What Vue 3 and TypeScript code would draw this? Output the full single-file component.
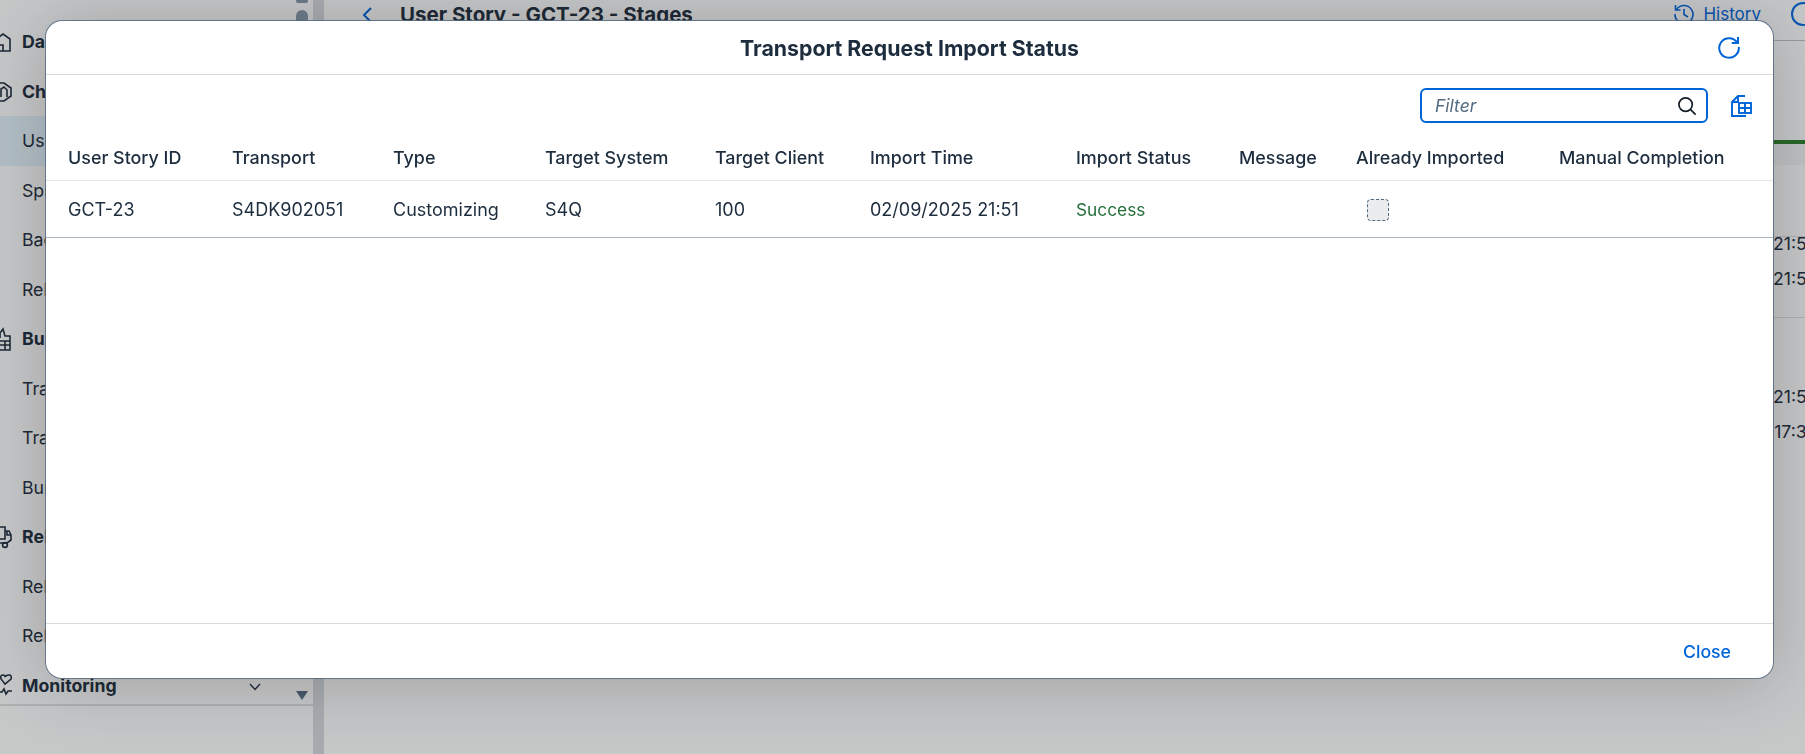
<script setup lang="ts">
const navItems = [
  { label: "Dashboard", group: true, icon: "home" },
  { label: "Change Management", group: true, icon: "change" },
  { label: "User Stories", selected: true },
  { label: "Sprints" },
  { label: "Backlog" },
  { label: "Releases" },
  { label: "Build", group: true, icon: "build" },
  { label: "Transports" },
  { label: "Transport Logs" },
  { label: "Builds" },
  { label: "Release Management", group: true, icon: "release" },
  { label: "Release Plans" },
  { label: "Release Notes" },
];

const columns = [
  "User Story ID",
  "Transport",
  "Type",
  "Target System",
  "Target Client",
  "Import Time",
  "Import Status",
  "Message",
  "Already Imported",
  "Manual Completion",
];
</script>

<template>
  <div class="page">
    <aside class="sidebar">
      <nav class="nav">
        <div
          v-for="item in navItems"
          :key="item.label"
          class="nav-item"
          :class="{ group: item.group, selected: item.selected }"
        >
          <span class="nav-icon">
            <svg v-if="item.icon === 'home'" width="12" height="20" viewBox="0 0 12 20" fill="none" stroke="#1d2d3e" stroke-width="1.6">
              <path d="M-6 9 L3 2 L10 7 V19 H-2 M3 19 V13 H0" />
            </svg>
            <svg v-if="item.icon === 'change'" width="13" height="22" viewBox="0 0 13 22" fill="none" stroke="#1d2d3e" stroke-width="1.6">
              <path d="M-2 3 H4 L11 8 V16 L4 21 H0 M1 17 V9 L4 7 L7 10 V17" />
            </svg>
            <svg v-if="item.icon === 'build'" width="12" height="24" viewBox="0 0 12 24" fill="none" stroke="#1d2d3e" stroke-width="1.6">
              <path d="M0 11 V6 L3 2 L5 9 H10 V23 H0 M0 14 H10 M0 18 H10 M5 14 V23" />
            </svg>
            <svg v-if="item.icon === 'release'" width="13" height="24" viewBox="0 0 13 24" fill="none" stroke="#1d2d3e" stroke-width="1.6">
              <path d="M0 2 H5 V14 H0 M5 6 H9 L11 10 V15 L7 18 H0 M7 6 V10 H11" />
              <circle cx="5" cy="20" r="2.4" />
            </svg>
          </span>
          <span class="nav-label">{{ item.label }}</span>
        </div>
        <div class="nav-item group last">
          <span class="nav-icon">
            <svg width="13" height="26" viewBox="0 0 13 26" fill="none" stroke="#1d2d3e" stroke-width="1.6">
              <path d="M5 12 L1 7 Q0 3 3 3 Q5 3 5 5 Q6 3 9 3 Q12 3 11 7 Z" />
              <path d="M0 20 H2 L4 17 L6 22 L8 19 H12" />
            </svg>
          </span>
          <span class="nav-label">Monitoring</span>
          <svg class="chevron" width="12" height="8" viewBox="0 0 12 8" fill="none" stroke="#1d2d3e" stroke-width="1.3">
            <path d="M1 1 L6 6.5 L11 1" />
          </svg>
        </div>
      </nav>
      <div class="nav-scroll">
        <span class="scroll-cap"></span>
        <span class="scroll-thumb"></span>
        <span class="scroll-arrow"></span>
      </div>
    </aside>
    <div class="splitter"></div>

    <main class="main">
      <header class="main-header">
        <svg class="back" width="11" height="16" viewBox="0 0 11 16" fill="none" stroke="#0064d9" stroke-width="2">
          <path d="M9 1 L2 8 L9 15" />
        </svg>
        <h1 class="main-title">User Story - GCT-23 - Stages</h1>
        <div class="main-actions">
          <svg width="22" height="22" viewBox="0 0 22 22" fill="none" stroke="#0064d9" stroke-width="1.6">
            <path d="M3.5 6.5 A9 9 0 1 1 2 11" />
            <path d="M2.5 2 V7 H7.5" />
            <path d="M11 6 V11.5 L15 14" />
          </svg>
          <span>History</span>
          <span class="round-icon"></span>
        </div>
      </header>
      <div class="progress-band">
        <div class="progress-bar"></div>
        <div class="progress-tail"></div>
      </div>
      <section class="times first">
        <div class="time-line"></div>
        <div class="time">02/09/2025 21:51</div>
        <div class="time">02/09/2025 21:51</div>
      </section>
      <section class="times second">
        <div class="time">02/09/2025 21:51</div>
        <div class="time">02/09/2025 17:31</div>
      </section>
    </main>

    <div class="overlay">
      <div class="dialog">
        <header class="dialog-header">
          <h2 class="dialog-title">Transport Request Import Status</h2>
          <svg class="refresh" width="24" height="24" viewBox="0 0 24 24" fill="none" stroke="#0064d9" stroke-width="2">
            <path d="M20.2 7.5 A9.8 9.8 0 1 0 21.8 12" />
            <path d="M21 2 V8 H14.8" />
          </svg>
        </header>

        <div class="dialog-body">
          <div class="toolbar">
            <label class="filter">
              <input class="filter-input" type="text" placeholder="Filter" />
              <svg width="20" height="20" viewBox="0 0 20 20" fill="none" stroke="#131e29" stroke-width="1.7">
                <circle cx="8.6" cy="8.6" r="6.7" />
                <path d="M13.6 13.6 L18.6 18.6" />
              </svg>
            </label>
            <svg class="export" width="22" height="24" viewBox="0 0 22 24" fill="none" stroke="#0064d9" stroke-width="1.9">
              <path d="M15 2 H8 L2 8 V22 H16" />
              <path d="M8 2 V8 H2" />
              <rect x="9" y="9" width="12" height="10" fill="#fff" />
              <path d="M9 14 H21 M15 9 V19" />
            </svg>
          </div>

          <div class="table-row table-head">
            <div v-for="col in columns" :key="col" class="cell">{{ col }}</div>
          </div>
          <div class="table-row table-data">
            <div class="cell">GCT-23</div>
            <div class="cell">S4DK902051</div>
            <div class="cell">Customizing</div>
            <div class="cell">S4Q</div>
            <div class="cell">100</div>
            <div class="cell">02/09/2025 21:51</div>
            <div class="cell status">Success</div>
            <div class="cell"></div>
            <div class="cell"><span class="checkbox"></span></div>
            <div class="cell"></div>
          </div>
        </div>

        <footer class="dialog-footer">
          <button class="close-btn">Close</button>
        </footer>
      </div>
    </div>
  </div>
</template>

<style>
html,
body {
  margin: 0;
  height: 100%;
  overflow: hidden;
}
</style>

<style scoped>
.page {
  display: flex;
  height: 754px;
  overflow: hidden;
  background: #f5f6f7;
  color: #1d2d3e;
  font-family: Inter, "Liberation Sans", sans-serif;
  font-size: 17.7px;
}

.sidebar {
  display: flex;
  width: 313px;
  height: 706px;
  border-bottom: 2px solid #d5d9dd;
  box-sizing: border-box;
  flex-shrink: 0;
}

.nav {
  flex: 1;
  padding-top: 17px;
}

.nav-item {
  display: flex;
  align-items: center;
  height: 49.5px;
  color: #1d2d3e;
}

.nav-item.group {
  font-weight: 700;
}

.nav-item.selected {
  background: #dcebf5;
}

.nav-icon {
  display: flex;
  align-items: center;
  width: 22px;
  flex-shrink: 0;
}

.nav-label {
  flex: 1;
}

.chevron {
  margin: 4px 32px 0 0;
}

.nav-scroll {
  position: relative;
  width: 20px;
}

.scroll-cap {
  position: absolute;
  top: -4px;
  left: 3px;
  width: 12px;
  height: 7px;
  border-radius: 2px;
  background: #8396a8;
}

.scroll-thumb {
  position: absolute;
  top: 10px;
  left: 3px;
  width: 12px;
  height: 660px;
  border-radius: 6px;
  background: #8396a8;
}

.scroll-arrow {
  position: absolute;
  top: 691px;
  left: 3px;
  width: 0;
  height: 0;
  border-left: 6px solid transparent;
  border-right: 6px solid transparent;
  border-top: 9px solid #556b81;
}

.splitter {
  width: 11px;
  background: #cfd4d9;
  flex-shrink: 0;
}

.main {
  flex: 1;
  min-width: 0;
}

.main-header {
  display: flex;
  align-items: center;
  height: 41px;
  padding: 0 0 13px 38px;
  box-sizing: border-box;
  border-bottom: 1px solid #b8bec4;
  white-space: nowrap;
}

.back {
  margin-top: 2px;
}

.main-title {
  margin: 2px 0 0 27px;
  font-size: 20.5px;
  font-weight: 700;
}

.main-actions {
  display: flex;
  align-items: center;
  gap: 8px;
  margin-left: auto;
  margin-top: 1px;
  color: #0064d9;
  font-size: 17px;
}

.round-icon {
  width: 20px;
  height: 20px;
  margin: 0 -10px 0 22px;
  border: 2px solid #0064d9;
  border-radius: 50%;
}

.progress-band {
  height: 124px;
  padding-top: 99px;
  box-sizing: border-box;
}

.progress-bar {
  height: 4px;
  background: #2b7c2b;
}

.progress-tail {
  height: 21px;
  background: #eceef0;
}

.times {
  display: flex;
  flex-direction: column;
  gap: 14px;
  margin-right: -9px;
  white-space: nowrap;
  text-align: right;
}

.time {
  line-height: 21px;
}

.times.first {
  height: 153px;
  box-sizing: border-box;
  border-bottom: 1px solid #d5d9dd;
  padding-top: 68px;
  position: relative;
}

.time-line {
  position: absolute;
  top: 71px;
  left: 0;
  right: 0;
  border-top: 1px solid #d5d9dd;
}

.times.second {
  padding-top: 68px;
}

.overlay {
  position: fixed;
  inset: 0;
  background: rgba(30, 30, 30, 0.22);
  display: flex;
  align-items: flex-start;
  justify-content: flex-start;
}

.dialog {
  display: flex;
  flex-direction: column;
  width: 1727px;
  height: 657px;
  margin: 21px 0 0 46px;
  background: #fff;
  border-radius: 16px;
  box-shadow: 0 0 0 1px rgba(85, 107, 130, 0.85), 0 4px 70px rgba(0, 0, 0, 0.2);
}

.dialog-header {
  position: relative;
  display: flex;
  align-items: center;
  justify-content: center;
  height: 53px;
  border-bottom: 1px solid #d9d9d9;
}

.dialog-title {
  margin: 0;
  font-size: 21.3px;
  font-weight: 700;
  color: #1d2d3e;
}

.refresh {
  position: absolute;
  right: 32px;
  top: 14px;
}

.dialog-body {
  flex: 1;
}

.toolbar {
  display: flex;
  align-items: center;
  justify-content: flex-end;
  gap: 22px;
  height: 35px;
  margin-top: 13px;
  padding-right: 21px;
}

.filter {
  display: flex;
  align-items: center;
  width: 288px;
  height: 35px;
  padding: 0 9px 0 13px;
  box-sizing: border-box;
  border: 2px solid #0064d9;
  border-radius: 6px;
}

.filter-input {
  flex: 1;
  min-width: 0;
  border: none;
  outline: none;
  padding: 0;
  background: transparent;
  font: inherit;
  font-size: 17.5px;
}

.filter-input::placeholder {
  color: #556b81;
  font-style: italic;
  opacity: 1;
}

.table-row {
  display: grid;
  grid-template-columns: 164px 161px 152px 170px 155px 206px 163px 117px 203px 1fr;
  padding-left: 22px;
  align-items: center;
}

.table-head {
  height: 58px;
  padding-top: 11px;
  box-sizing: border-box;
  border-bottom: 1px solid #e5e5e5;
  font-size: 17.9px;
  font-weight: 500;
}

.table-data {
  height: 57px;
  box-sizing: border-box;
  border-bottom: 1px solid #a9b4be;
  font-size: 18px;
}

.status {
  color: #256f3a;
  font-size: 17.3px;
}

.checkbox {
  display: block;
  width: 22px;
  height: 22px;
  margin: 1px 0 0 11px;
  box-sizing: border-box;
  background: #eaecee;
  border: 1px dashed #556b81;
  border-radius: 4px;
}

.dialog-footer {
  display: flex;
  align-items: center;
  justify-content: flex-end;
  height: 54px;
  padding-right: 42px;
  border-top: 1px solid #d9d9d9;
}

.close-btn {
  padding: 0;
  border: none;
  background: none;
  color: #0064d9;
  font: inherit;
  font-weight: 500;
  cursor: pointer;
}
</style>
